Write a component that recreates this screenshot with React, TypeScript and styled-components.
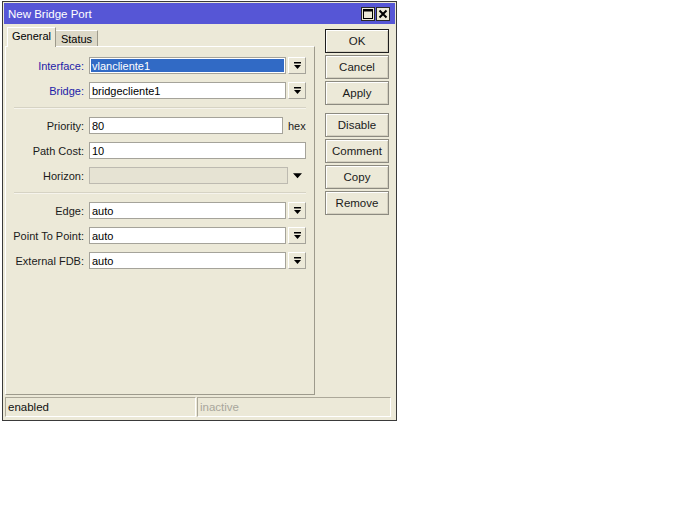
import React from "react";
import styled, { createGlobalStyle, css } from "styled-components";

const Global = createGlobalStyle`
  html, body { margin: 0; padding: 0; background: #ffffff; }
  body { font-family: "Liberation Sans", Arial, sans-serif; font-size: 11px; color: #000; }
  * { box-sizing: border-box; }
`;

const BEIGE = "#ece9d8";

const Window = styled.div`
  margin: 1px 0 0 2px;
  width: 395px;
  height: 420px;
  border: 1px solid #3a3a3a;
  padding: 1px;
  background: ${BEIGE};
  display: flex;
  flex-direction: column;
`;

const TitleBar = styled.div`
  height: 21px;
  background: #5656d6;
  display: flex;
  align-items: center;
  padding: 0 5px 0 4px;
`;

const Title = styled.div`
  flex: 1;
  color: #ffffff;
  font-size: 11.5px;
`;

const TitleButtons = styled.div`
  display: flex;
  gap: 1px;
`;

const TitleButton = styled.div`
  width: 14px;
  height: 14px;
  background: ${BEIGE};
  border: 1px solid #2a2a2a;
  display: flex;
  align-items: center;
  justify-content: center;
`;

const Content = styled.div`
  flex: 1;
  display: flex;
  padding: 3px 0 1px 1px;
  gap: 10px;
`;

const LeftCol = styled.div`
  width: 310px;
  display: flex;
  flex-direction: column;
`;

const TabStrip = styled.div`
  height: 19px;
  display: flex;
  align-items: flex-end;
  padding-left: 2px;
  position: relative;
  z-index: 1;
`;

const Tab = styled.div<{ $active?: boolean }>`
  display: flex;
  align-items: center;
  justify-content: center;
  border-top: 1px solid #ffffff;
  border-left: 1px solid #ffffff;
  border-right: 1px solid #9d9a8c;
  ${(p) =>
    p.$active
      ? css`
          width: 49px;
          height: 20px;
          margin-bottom: -1px;
          background: ${BEIGE};
          padding-bottom: 3px;
        `
      : css`
          width: 42px;
          height: 16px;
          background: #dcd8c7;
          border-left: none;
          padding-top: 1px;
        `}
`;

const Panel = styled.div`
  flex: 1;
  border-top: 1px solid #ffffff;
  border-left: 1px solid #ffffff;
  border-right: 1px solid #9d9a8c;
  border-bottom: 1px solid #9d9a8c;
  padding: 10px 0 0 0;
  display: flex;
  flex-direction: column;
`;

const Row = styled.div`
  height: 17px;
  margin-bottom: 8px;
  display: flex;
  align-items: center;
`;

const Label = styled.div<{ $blue?: boolean }>`
  width: 78px;
  text-align: right;
  margin-right: 5px;
  color: ${(p) => (p.$blue ? "#1c1ca8" : "#1a1a1a")};
  white-space: nowrap;
`;

const Field = styled.div<{ $w: number; $disabled?: boolean }>`
  width: ${(p) => p.$w}px;
  height: 17px;
  border: 1px solid ${(p) => (p.$disabled ? "#bdbab0" : "#a5a39a")};
  background: ${(p) => (p.$disabled ? "#e6e3d3" : "#ffffff")};
  padding: 1px;
  display: flex;
`;

const FieldText = styled.div<{ $selected?: boolean }>`
  flex: 1;
  display: flex;
  align-items: center;
  padding-left: 1px;
  ${(p) =>
    p.$selected &&
    css`
      background: #316ac5;
      color: #ffffff;
    `}
`;

const DropButton = styled.div`
  width: 18px;
  height: 17px;
  margin-left: 2px;
  background: ${BEIGE};
  border-top: 1px solid #ffffff;
  border-left: 1px solid #ffffff;
  border-right: 1px solid #a5a39a;
  border-bottom: 1px solid #a5a39a;
  display: flex;
  align-items: center;
  justify-content: center;
`;

const Suffix = styled.div`
  margin-left: 5px;
  color: #1a1a1a;
`;

const PlainArrow = styled.div`
  margin-left: 5px;
  width: 9px;
  display: flex;
`;

const Separator = styled.div`
  height: 1px;
  margin: 0 8px 9px 8px;
  background: #d6d3c4;
  box-shadow: 0 1px 0 #f6f4ec;
`;

const ButtonCol = styled.div`
  width: 64px;
  padding-top: 2px;
  display: flex;
  flex-direction: column;
  gap: 2px;
`;

const Button = styled.div<{ $default?: boolean; $groupStart?: boolean }>`
  height: 24px;
  display: flex;
  align-items: center;
  justify-content: center;
  background: ${BEIGE};
  border: 1px solid ${(p) => (p.$default ? "#1e1e1e" : "#8c8a80")};
  box-shadow: inset 1px 1px 0 #ffffff, inset -1px -1px 0 #d4d0c0;
  color: #1a1a1a;
  font-size: 11.5px;
  ${(p) => p.$groupStart && css`margin-top: 6px;`}
`;

const StatusBar = styled.div`
  height: 23px;
  display: flex;
  gap: 1px;
  padding: 1px 4px 2px 1px;
`;

const StatusCell = styled.div<{ $w: number; $dim?: boolean }>`
  width: ${(p) => p.$w}px;
  border-top: 1px solid #aca899;
  border-left: 1px solid #aca899;
  border-right: 1px solid #ffffff;
  border-bottom: 1px solid #ffffff;
  display: flex;
  align-items: center;
  padding-left: 2px;
  color: ${(p) => (p.$dim ? "#a8a69c" : "#111")};
  font-size: 11.5px;
`;

const DropIcon = () => (
  <svg width="9" height="8" viewBox="0 0 9 8">
    <rect x="1" y="0" width="7" height="1.5" fill="#000" />
    <polygon points="1,3 8,3 4.5,7" fill="#000" />
  </svg>
);

const DownTriangle = () => (
  <svg width="10" height="6" viewBox="0 0 10 6">
    <polygon points="0,0 10,0 5,5.5" fill="#000" />
  </svg>
);

const MaxIcon = () => (
  <svg width="10" height="10" viewBox="0 0 10 10">
    <rect x="0.5" y="0.5" width="9" height="9" fill="none" stroke="#000" strokeWidth="1" />
    <rect x="0" y="0" width="10" height="2.5" fill="#000" />
  </svg>
);

const CloseIcon = () => (
  <svg width="10" height="10" viewBox="0 0 10 10">
    <path d="M1.5 1.5 L8.5 8.5 M8.5 1.5 L1.5 8.5" stroke="#000" strokeWidth="2" />
  </svg>
);

type ComboProps = { label: string; value: string; blue?: boolean; selected?: boolean };

const ComboRow = ({ label, value, blue, selected }: ComboProps) => (
  <Row>
    <Label $blue={blue}>{label}</Label>
    <Field $w={197}>
      <FieldText $selected={selected}>{value}</FieldText>
    </Field>
    <DropButton>
      <DropIcon />
    </DropButton>
  </Row>
);

export default function App() {
  return (
    <>
      <Global />
      <Window>
        <TitleBar>
          <Title>New Bridge Port</Title>
          <TitleButtons>
            <TitleButton>
              <MaxIcon />
            </TitleButton>
            <TitleButton>
              <CloseIcon />
            </TitleButton>
          </TitleButtons>
        </TitleBar>
        <Content>
          <LeftCol>
            <TabStrip>
              <Tab $active>General</Tab>
              <Tab>Status</Tab>
            </TabStrip>
            <Panel>
              <ComboRow label="Interface:" value="vlancliente1" blue selected />
              <ComboRow label="Bridge:" value="bridgecliente1" blue />
              <Separator />
              <Row>
                <Label>Priority:</Label>
                <Field $w={194}>
                  <FieldText>80</FieldText>
                </Field>
                <Suffix>hex</Suffix>
              </Row>
              <Row>
                <Label>Path Cost:</Label>
                <Field $w={217}>
                  <FieldText>10</FieldText>
                </Field>
              </Row>
              <Row>
                <Label>Horizon:</Label>
                <Field $w={199} $disabled>
                  <FieldText />
                </Field>
                <PlainArrow>
                  <DownTriangle />
                </PlainArrow>
              </Row>
              <Separator />
              <ComboRow label="Edge:" value="auto" />
              <ComboRow label="Point To Point:" value="auto" />
              <ComboRow label="External FDB:" value="auto" />
            </Panel>
          </LeftCol>
          <ButtonCol>
            <Button $default>OK</Button>
            <Button>Cancel</Button>
            <Button>Apply</Button>
            <Button $groupStart>Disable</Button>
            <Button>Comment</Button>
            <Button>Copy</Button>
            <Button>Remove</Button>
          </ButtonCol>
        </Content>
        <StatusBar>
          <StatusCell $w={191}>enabled</StatusCell>
          <StatusCell $w={194} $dim>
            inactive
          </StatusCell>
        </StatusBar>
      </Window>
    </>
  );
}
